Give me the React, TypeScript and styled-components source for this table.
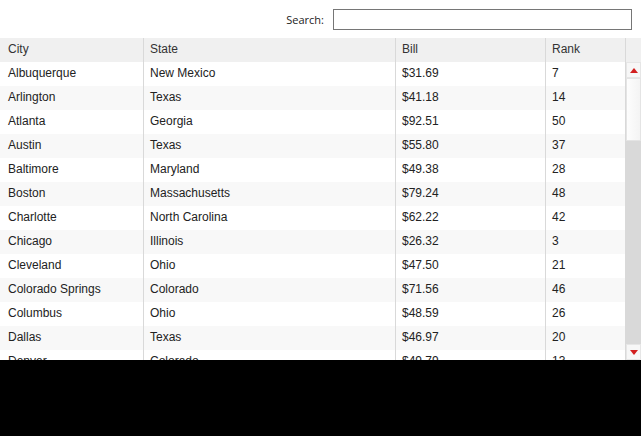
import React from 'react';
import styled, { createGlobalStyle } from 'styled-components';

type City = { city: string; state: string; bill: string; rank: number };

const cities: City[] = [
  { city: 'Albuquerque', state: 'New Mexico', bill: '$31.69', rank: 7 },
  { city: 'Arlington', state: 'Texas', bill: '$41.18', rank: 14 },
  { city: 'Atlanta', state: 'Georgia', bill: '$92.51', rank: 50 },
  { city: 'Austin', state: 'Texas', bill: '$55.80', rank: 37 },
  { city: 'Baltimore', state: 'Maryland', bill: '$49.38', rank: 28 },
  { city: 'Boston', state: 'Massachusetts', bill: '$79.24', rank: 48 },
  { city: 'Charlotte', state: 'North Carolina', bill: '$62.22', rank: 42 },
  { city: 'Chicago', state: 'Illinois', bill: '$26.32', rank: 3 },
  { city: 'Cleveland', state: 'Ohio', bill: '$47.50', rank: 21 },
  { city: 'Colorado Springs', state: 'Colorado', bill: '$71.56', rank: 46 },
  { city: 'Columbus', state: 'Ohio', bill: '$48.59', rank: 26 },
  { city: 'Dallas', state: 'Texas', bill: '$46.97', rank: 20 },
  { city: 'Denver', state: 'Colorado', bill: '$49.79', rank: 13 },
  { city: 'Detroit', state: 'Michigan', bill: '$61.22', rank: 41 },
];

const COLS = '144px 252px 150px 80px';

const GlobalStyle = createGlobalStyle`
  html, body {
    margin: 0;
    padding: 0;
    background: #000;
  }
`;

const Page = styled.div`
  width: 641px;
  height: 360px;
  background: #fff;
  display: flex;
  flex-direction: column;
  overflow: hidden;
  font-family: 'Liberation Sans', Arial, sans-serif;
  color: #222;
`;

const Toolbar = styled.div`
  height: 38px;
  display: flex;
  align-items: center;
  justify-content: flex-end;
  padding-right: 9px;
  gap: 9px;
`;

const SearchLabel = styled.label`
  font-family: 'Open Sans', 'Noto Sans', sans-serif;
  font-size: 11px;
  color: #222;
`;

const SearchInput = styled.input`
  width: 299px;
  height: 21px;
  box-sizing: border-box;
  border: 1px solid #767676;
  margin: 0;
  padding: 0 4px;
  outline: none;
`;

const HeaderRow = styled.div`
  display: grid;
  grid-template-columns: ${COLS} 15px;
  height: 24px;
  background: #f0f0f0;
`;

const Cell = styled.div<{ $head?: boolean }>`
  box-sizing: border-box;
  border-right: 1px solid #d9d9d9;
  padding: 0 6px;
  font-size: 12px;
  line-height: 22px;
  white-space: nowrap;
  overflow: hidden;
  color: ${(p) => (p.$head ? '#333' : '#222')};
  &:first-child {
    padding-left: 8px;
  }
`;

const Body = styled.div`
  flex: 1;
  display: flex;
  min-height: 0;
`;

const Rows = styled.div`
  width: 626px;
  overflow: hidden;
`;

const Row = styled.div<{ $even: boolean }>`
  display: grid;
  grid-template-columns: ${COLS};
  height: 24px;
  background: ${(p) => (p.$even ? '#f8f8f8' : '#fff')};
`;

const Scrollbar = styled.div`
  width: 15px;
  display: flex;
  flex-direction: column;
  background: #d9d9d9;
`;

const ArrowButton = styled.div`
  height: 16px;
  flex: none;
  display: flex;
  align-items: center;
  justify-content: center;
  background: #f7f7f7;
  border: 1px solid #e6e6e6;
  box-sizing: border-box;
`;

const Thumb = styled.div`
  height: 63px;
  flex: none;
  box-sizing: border-box;
  background: linear-gradient(to right, #fdfdfd, #f4f4f4);
  border: 1px solid #e4e4e4;
`;

const Track = styled.div`
  flex: 1;
`;

const Arrow = ({ down }: { down?: boolean }) => (
  <svg width="8" height="5" viewBox="0 0 8 5">
    <path d={down ? 'M0 0 H8 L4 5 Z' : 'M0 5 H8 L4 0 Z'} fill="#d21f1f" />
  </svg>
);

export default function App() {
  return (
    <>
      <GlobalStyle />
      <Page>
        <Toolbar>
          <SearchLabel htmlFor="search">Search:</SearchLabel>
          <SearchInput id="search" type="text" />
        </Toolbar>
        <HeaderRow>
          <Cell $head>City</Cell>
          <Cell $head>State</Cell>
          <Cell $head>Bill</Cell>
          <Cell $head>Rank</Cell>
          <div />
        </HeaderRow>
        <Body>
          <Rows>
            {cities.map((c, i) => (
              <Row key={c.city} $even={i % 2 === 1}>
                <Cell>{c.city}</Cell>
                <Cell>{c.state}</Cell>
                <Cell>{c.bill}</Cell>
                <Cell>{c.rank}</Cell>
              </Row>
            ))}
          </Rows>
          <Scrollbar>
            <ArrowButton>
              <Arrow />
            </ArrowButton>
            <Thumb />
            <Track />
            <ArrowButton>
              <Arrow down />
            </ArrowButton>
          </Scrollbar>
        </Body>
      </Page>
    </>
  );
}
